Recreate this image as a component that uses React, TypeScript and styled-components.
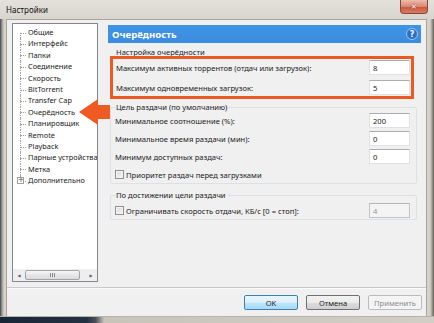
import React from "react";
import styled, { createGlobalStyle } from "styled-components";

const GlobalStyle = createGlobalStyle`
  html, body {
    margin: 0;
    padding: 0;
    background: #1f2b3a;
  }
  body {
    font-family: "Noto Sans", "Open Sans", sans-serif;
    font-size: 7.6px;
    color: #1b1b1b;
  }
`;

const Window = styled.div`
  position: relative;
  width: 434px;
  height: 323px;
  display: flex;
  flex-direction: column;
  box-sizing: border-box;
  background: linear-gradient(
    to right,
    #3b4656 0,
    #9c9a94 2px,
    #d6d2ca 4px,
    #dad7d0 50%,
    #d6d2ca calc(100% - 4px),
    #a29d94 calc(100% - 2px),
    #5f5a53 100%
  );
`;

const TitleBar = styled.div`
  height: 19px;
  flex: none;
  display: flex;
  align-items: flex-start;
  justify-content: space-between;
  padding: 0 6px 0 6px;
  background: linear-gradient(to bottom, #e4e1db 0, #d8d5ce 100%);
`;

const TitleText = styled.span`
  margin-top: 5px;
  font-size: 8px;
  line-height: 10px;
  color: #101010;
`;

const CloseButton = styled.div`
  width: 28px;
  height: 14px;
  box-sizing: border-box;
  display: flex;
  align-items: center;
  justify-content: center;
  border: 1px solid #8a4636;
  border-top: none;
  border-radius: 0 0 4px 4px;
  background: linear-gradient(to bottom, #ecbcae 0, #dc8670 50%, #c9583e 55%, #d97c62 100%);
  color: #fff;
  font-family: "DejaVu Sans", sans-serif;
  font-weight: 700;
  font-size: 7px;
  text-shadow: 0 0 2px #5a1a10;
`;

const Client = styled.div`
  flex: 1;
  margin: 0 7px 0 6px;
  display: flex;
  flex-direction: column;
  background: #f0f0f0;
  border: 1px solid #a9a59d;
  border-bottom: none;
`;

const Body = styled.div`
  height: 262px;
  flex: none;
  display: flex;
  gap: 10px;
  padding: 3px 5px 0 5px;
  box-sizing: border-box;
`;

const Tree = styled.div`
  width: 86px;
  height: 259px;
  box-sizing: border-box;
  display: flex;
  flex-direction: column;
  background: #fff;
  border: 1px solid #828790;
`;

const TreeList = styled.div`
  flex: 1;
  padding-top: 3px;
  overflow: hidden;
`;

const TreeItem = styled.div`
  height: 11.4px;
  display: flex;
  align-items: center;
  white-space: nowrap;
  line-height: 11.4px;
  font-size: 7.4px;
`;

const Branch = styled.span<{ $first?: boolean; $last?: boolean }>`
  position: relative;
  flex: none;
  width: 14px;
  height: 100%;

  &::before {
    content: "";
    position: absolute;
    left: 7px;
    top: ${(p) => (p.$first ? "50%" : "0")};
    bottom: ${(p) => (p.$last ? "50%" : "0")};
    border-left: 1px dotted #a0a0a0;
  }

  &::after {
    content: "";
    position: absolute;
    left: 7px;
    width: 6px;
    top: 50%;
    border-top: 1px dotted #a0a0a0;
  }
`;

const Expander = styled.span`
  position: absolute;
  left: 4px;
  top: 2px;
  width: 7px;
  height: 7px;
  box-sizing: border-box;
  border: 1px solid #a0a0a0;
  background: #fff;
  z-index: 1;
  font-size: 7px;
  line-height: 5px;
  text-align: center;
  color: #404040;
  font-family: "DejaVu Sans", sans-serif;
`;

const ItemLabel = styled.span`
  padding-left: 1px;
`;

const HScroll = styled.div`
  height: 12px;
  flex: none;
  display: flex;
  align-items: center;
  background: #eeeeee;
`;

const ScrollArrow = styled.span`
  width: 12px;
  height: 12px;
  display: flex;
  align-items: center;
  justify-content: center;
  color: #5a5a5a;
  font-size: 4px;
  font-family: "DejaVu Sans", sans-serif;
`;

const ScrollTrack = styled.div`
  flex: 1;
  height: 100%;
  display: flex;
  align-items: center;
`;

const ScrollThumb = styled.div`
  width: 55px;
  height: 10px;
  box-sizing: border-box;
  border: 1px solid #a3a3a3;
  border-radius: 2px;
  background: linear-gradient(to bottom, #f6f6f6 0, #e6e6e6 50%, #d9d9d9 100%);
  display: flex;
  align-items: center;
  justify-content: center;
  gap: 1px;
`;

const Grip = styled.span`
  width: 1px;
  height: 4px;
  background: #8a8a8a;
`;

const Page = styled.div`
  flex: 1;
  padding-top: 2px;
  display: flex;
  flex-direction: column;
`;

const Header = styled.div`
  height: 18px;
  flex: none;
  display: flex;
  align-items: center;
  justify-content: space-between;
  padding: 0 3px 0 4px;
  background: linear-gradient(to bottom, #4094e4 0, #3a8ce0 100%);
  color: #fff;
  font-weight: 700;
  font-size: 9.6px;
`;

const GroupTitle = styled.div`
  margin: 4px 0 0 8px;
  height: 10px;
  line-height: 10px;
`;

const Highlight = styled.div`
  position: relative;
  margin: -1px 7px 0 2px;
  padding: 1px 1px 1px 3px;
  border: 3px solid #ec5a24;
  display: flex;
  flex-direction: column;
  gap: 5px;
`;

const Group = styled.fieldset<{ $top: number }>`
  margin: ${(p) => p.$top}px 4px 0 2px;
  padding: 0 6px 1px 4px;
  border: 1px solid #dbe1e5;
  border-radius: 2px;
  display: flex;
  flex-direction: column;
  min-width: 0;
`;

const Legend = styled.legend`
  padding: 0 1px;
  height: 10px;
  line-height: 10px;
`;

const Rows = styled.div<{ $top: number }>`
  margin-top: ${(p) => p.$top}px;
  display: flex;
  flex-direction: column;
  gap: 3px;
`;

const Row = styled.div<{ $h?: number }>`
  height: ${(p) => p.$h ?? 15}px;
  display: flex;
  align-items: center;
  justify-content: space-between;
  white-space: nowrap;
`;

const Field = styled.div<{ $disabled?: boolean }>`
  width: 41px;
  height: 15px;
  box-sizing: border-box;
  padding-left: 3px;
  display: flex;
  align-items: center;
  background: ${(p) => (p.$disabled ? "#f4f4f4" : "#fff")};
  border: 1px solid ${(p) => (p.$disabled ? "#c2c4c8" : "#dfe1e6")};
  border-top-color: ${(p) => (p.$disabled ? "#b4b6ba" : "#abadb3")};
  color: ${(p) => (p.$disabled ? "#9a9a9a" : "#1b1b1b")};
`;

const CheckLabel = styled.label`
  display: flex;
  align-items: center;
  gap: 2px;
`;

const CheckBox = styled.span`
  width: 9px;
  height: 9px;
  box-sizing: border-box;
  border: 1px solid #8f8f8f;
  background: linear-gradient(135deg, #dcdcdc 0, #f4f4f4 100%);
  box-shadow: inset 0 0 0 1px #f6f6f6;
`;

const Separator = styled.div`
  margin-top: 5px;
  height: 0;
  border-top: 1px solid #c9c9c9;
  border-bottom: 1px solid #fbfbfb;
`;

const Footer = styled.div`
  flex: 1;
  display: flex;
  justify-content: flex-end;
  align-items: flex-start;
  gap: 8px;
  padding: 6px 4px 0 0;
`;

const Button = styled.div<{ $variant?: "default" | "normal" | "disabled" }>`
  width: 54px;
  height: 15px;
  box-sizing: border-box;
  display: flex;
  align-items: center;
  justify-content: center;
  border-radius: 2px;
  border: 1px solid
    ${(p) =>
      p.$variant === "default" ? "#3c7fb1" : p.$variant === "disabled" ? "#b9bcbf" : "#707070"};
  background: ${(p) =>
    p.$variant === "default"
      ? "linear-gradient(to bottom, #eaf6fd 0, #d9f0fc 50%, #bee6fd 51%, #a7d9f5 100%)"
      : p.$variant === "disabled"
      ? "#f4f4f4"
      : "linear-gradient(to bottom, #f2f2f2 0, #ebebeb 50%, #dddddd 51%, #cfcfcf 100%)"};
  color: ${(p) => (p.$variant === "disabled" ? "#8c8c8c" : "#1b1b1b")};
`;

const BottomFrame = styled.div`
  height: 6px;
  flex: none;
  background: linear-gradient(
    to right,
    #182536 0,
    #233144 20%,
    #4a4f55 22%,
    #c9c4ba 24%,
    #d2cec6 100%
  );
  border-top: 1px solid #b8b3aa;
`;

const Arrow = styled.svg`
  position: absolute;
  left: 78px;
  top: 98px;
`;

const treeItems = [
  "Общие",
  "Интерфейс",
  "Папки",
  "Соединение",
  "Скорость",
  "BitTorrent",
  "Transfer Cap",
  "Очерёдность",
  "Планировщик",
  "Remote",
  "Playback",
  "Парные устройства",
  "Метка",
  "Дополнительно",
];

function HelpIcon() {
  return (
    <svg width="12" height="12" viewBox="0 0 12 12">
      <circle cx="6" cy="6" r="5.5" fill="#2d6fc8" stroke="#9cc6f0" strokeWidth="1" />
      <text
        x="6"
        y="9"
        textAnchor="middle"
        fontSize="8"
        fontWeight="700"
        fill="#fff"
        fontFamily="DejaVu Sans, sans-serif"
      >
        ?
      </text>
    </svg>
  );
}

export default function App() {
  return (
    <>
      <GlobalStyle />
      <Window>
        <TitleBar>
          <TitleText>Настройки</TitleText>
          <CloseButton>✕</CloseButton>
        </TitleBar>
        <Client>
          <Body>
            <Tree>
              <TreeList>
                {treeItems.map((item, i) => (
                  <TreeItem key={item}>
                    <Branch $first={i === 0} $last={i === treeItems.length - 1}>
                      {i === treeItems.length - 1 && <Expander>+</Expander>}
                    </Branch>
                    <ItemLabel>{item}</ItemLabel>
                  </TreeItem>
                ))}
              </TreeList>
              <HScroll>
                <ScrollArrow>◀</ScrollArrow>
                <ScrollTrack>
                  <ScrollThumb>
                    <Grip />
                    <Grip />
                    <Grip />
                  </ScrollThumb>
                </ScrollTrack>
                <ScrollArrow>▶</ScrollArrow>
              </HScroll>
            </Tree>
            <Page>
              <Header>
                <span>Очерёдность</span>
                <HelpIcon />
              </Header>
              <GroupTitle>Настройка очерёдности</GroupTitle>
              <Highlight>
                <Row>
                  <span>Максимум активных торрентов (отдач или загрузок):</span>
                  <Field>8</Field>
                </Row>
                <Row>
                  <span>Максимум одновременных загрузок:</span>
                  <Field>5</Field>
                </Row>
              </Highlight>
              <Group $top={3}>
                <Legend>Цель раздачи (по умолчанию)</Legend>
                <Rows $top={1}>
                  <Row>
                    <span>Минимальное соотношение (%):</span>
                    <Field>200</Field>
                  </Row>
                  <Row>
                    <span>Минимальное время раздачи (мин):</span>
                    <Field>0</Field>
                  </Row>
                  <Row>
                    <span>Минимум доступных раздач:</span>
                    <Field>0</Field>
                  </Row>
                  <Row $h={15}>
                    <CheckLabel>
                      <CheckBox />
                      Приоритет раздач перед загрузками
                    </CheckLabel>
                  </Row>
                </Rows>
              </Group>
              <Group $top={6}>
                <Legend>По достижении цели раздачи</Legend>
                <Rows $top={3}>
                  <Row>
                    <CheckLabel>
                      <CheckBox />
                      Ограничивать скорость отдачи, КБ/с [0 = стоп]:
                    </CheckLabel>
                    <Field $disabled>4</Field>
                  </Row>
                </Rows>
              </Group>
            </Page>
          </Body>
          <Separator />
          <Footer>
            <Button $variant="default">OK</Button>
            <Button>Отмена</Button>
            <Button $variant="disabled">Применить</Button>
          </Footer>
        </Client>
        <BottomFrame />
        <Arrow width="34" height="30" viewBox="0 0 34 30">
          <polygon points="1,14 20,1 20,7 32,7 32,21 20,21 20,27" fill="#ef5a23" />
        </Arrow>
      </Window>
    </>
  );
}
